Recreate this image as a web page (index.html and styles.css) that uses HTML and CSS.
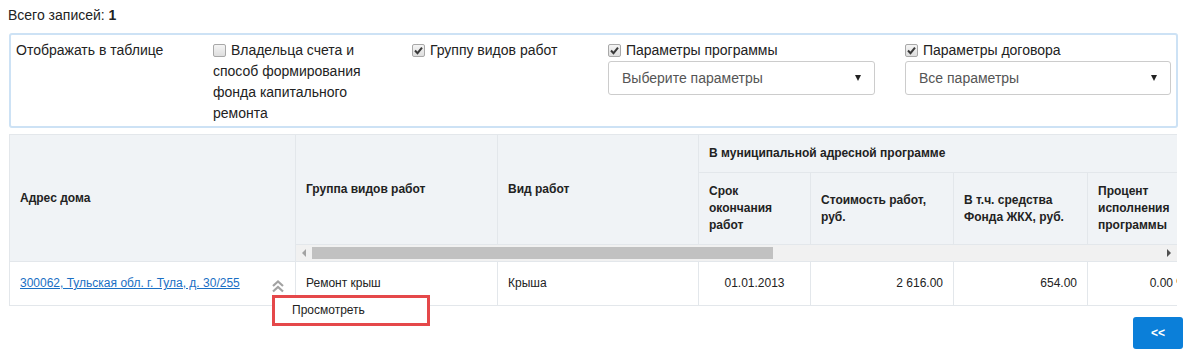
FILE: index.html
```html
<!DOCTYPE html>
<html lang="ru">
<head>
<meta charset="utf-8">
<title>Записи</title>
<link rel="stylesheet" href="styles.css">
</head>
<body>
<div class="total">Всего записей: <b>1</b></div>

<div class="filter">
  <div class="f-label">Отображать в таблице</div>
  <div class="f-col f-col2">
    <span class="cb"></span> Владельца счета и способ формирования фонда капитального ремонта
  </div>
  <div class="f-col f-col3">
    <span class="cb checked"><svg viewBox="0 0 13 13" width="13" height="13"><path d="M3 6.5 L5.5 9.2 L10 3.6" fill="none" stroke="#3a3a3a" stroke-width="2"/></svg></span> Группу видов работ
  </div>
  <div class="f-col f-col4">
    <div class="f-check"><span class="cb checked"><svg viewBox="0 0 13 13" width="13" height="13"><path d="M3 6.5 L5.5 9.2 L10 3.6" fill="none" stroke="#3a3a3a" stroke-width="2"/></svg></span> Параметры программы</div>
    <div class="select"><span>Выберите параметры</span><span class="caret"></span></div>
  </div>
  <div class="f-col f-col5">
    <div class="f-check"><span class="cb checked"><svg viewBox="0 0 13 13" width="13" height="13"><path d="M3 6.5 L5.5 9.2 L10 3.6" fill="none" stroke="#3a3a3a" stroke-width="2"/></svg></span> Параметры договора</div>
    <div class="select"><span>Все параметры</span><span class="caret"></span></div>
  </div>
</div>

<div class="table-area">
  <div class="fixed-col">
    <div class="fixed-head">Адрес дома</div>
    <div class="fixed-body">
      <a class="addr" href="#">300062, Тульская обл. г. Тула, д. 30/255</a>
      <svg class="chev" viewBox="0 0 14 14" width="14" height="14"><path d="M2 7 L7 2.5 L12 7 M2 12.5 L7 8 L12 12.5" fill="none" stroke="#a3a3a3" stroke-width="2.2"/></svg>
    </div>
  </div>
  <div class="scroll-col">
    <div class="head-grid">
      <div class="hc h-group">Группа видов работ</div>
      <div class="hc h-vid">Вид работ</div>
      <div class="hc h-muni">В муниципальной адресной программе</div>
      <div class="hc">Срок окончания работ</div>
      <div class="hc">Стоимость работ, руб.</div>
      <div class="hc">В т.ч. средства Фонда ЖКХ, руб.</div>
      <div class="hc">Процент исполнения программы</div>
    </div>
    <div class="scrollbar">
      <span class="sb-btn"><span class="tri-left"></span></span>
      <span class="sb-thumb"></span>
      <span class="sb-space"></span>
      <span class="sb-btn"><span class="tri-right"></span></span>
    </div>
    <div class="body-grid">
      <div class="bc">Ремонт крыш</div>
      <div class="bc">Крыша</div>
      <div class="bc center">01.01.2013</div>
      <div class="bc right">2 616.00</div>
      <div class="bc right">654.00</div>
      <div class="bc right">0.00 %</div>
    </div>
  </div>
  <div class="menu">Просмотреть</div>
</div>

<div class="pager">
  <button class="btn" type="button">&lt;&lt;</button>
</div>
</body>
</html>
```

FILE: styles.css
```css
* { box-sizing: border-box; }

body {
  margin: 0;
  font-family: "Liberation Sans", Arial, sans-serif;
  color: #222;
  background: #fff;
}

.total {
  padding: 5px 8px 0;
  font-size: 14px;
  line-height: 20px;
  height: 25px;
}

.filter {
  margin: 8px 12px 0 9px;
  border: 2px solid #cde2f5;
  border-radius: 3px;
  padding: 5px 5px 2px 5px;
  display: grid;
  grid-template-columns: 197px 199px 196px 297px 1fr;
  font-size: 14px;
  line-height: 21px;
}

.f-col2 { padding-right: 18px; }
.f-col4 { padding-right: 30px; }

.cb {
  display: inline-block;
  width: 13px;
  height: 13px;
  border: 1px solid #a8a8a8;
  border-radius: 2px;
  background: linear-gradient(#f4f4f4, #dedede);
  vertical-align: -2px;
  margin-right: 1px;
  position: relative;
}
.cb svg {
  position: absolute;
  left: -1px;
  top: -1px;
}

.select {
  height: 34px;
  border: 1px solid #ccc;
  border-radius: 3px;
  display: flex;
  align-items: center;
  justify-content: space-between;
  padding: 0 13px 0 13px;
  color: #555;
  font-size: 14px;
}
.caret {
  width: 0;
  height: 0;
  border-left: 3.5px solid transparent;
  border-right: 3.5px solid transparent;
  border-top: 6px solid #222;
}

.table-area {
  position: relative;
  margin: 6px 13px 0 9px;
  display: flex;
  border-top: 1px solid #e3e7eb;
  font-size: 12px;
  line-height: 17px;
}

.fixed-col {
  width: 287px;
  flex: none;
  border-left: 1px solid #e3e7eb;
  border-right: 1px solid #e3e7eb;
}
.fixed-head {
  height: 127px;
  background: #f0f3f6;
  border-bottom: 1px solid #e3e7eb;
  display: flex;
  align-items: center;
  padding-left: 10px;
  font-weight: bold;
}
.fixed-body {
  height: 44px;
  border-bottom: 1px solid #e3e7eb;
  display: flex;
  align-items: center;
  justify-content: space-between;
  padding: 0 10px 0 10px;
}
.addr {
  color: #1a6fc4;
  text-decoration: underline;
}
.chev { margin-top: 5px; }

.scroll-col {
  flex: 1;
  overflow: hidden;
  min-width: 0;
}

.head-grid, .body-grid {
  display: grid;
  grid-template-columns: 202px 201px 112px 143px 134px 110px;
  width: 902px;
}
.head-grid {
  grid-template-rows: 38px 72px;
  background: #f0f3f6;
}
.hc {
  border-right: 1px solid #e3e7eb;
  border-bottom: 1px solid #e3e7eb;
  display: flex;
  align-items: center;
  padding: 0 10px;
  font-weight: bold;
}
.h-group { grid-row: 1 / 3; grid-column: 1; }
.h-vid { grid-row: 1 / 3; grid-column: 2; }
.h-muni { grid-column: 3 / 7; }

.scrollbar {
  height: 17px;
  background: #f1f1f1;
  border-bottom: 1px solid #e3e7eb;
  display: flex;
  align-items: center;
}
.sb-btn {
  width: 16px;
  height: 16px;
  flex: none;
  display: flex;
  align-items: center;
  justify-content: center;
}
.tri-left {
  border-top: 4px solid transparent;
  border-bottom: 4px solid transparent;
  border-right: 4px solid #a3a3a3;
}
.tri-right {
  border-top: 4px solid transparent;
  border-bottom: 4px solid transparent;
  border-left: 4px solid #505050;
}
.sb-thumb {
  width: 461px;
  height: 12px;
  background: #c1c1c1;
  flex: none;
}
.sb-space { flex: 1; }

.body-grid {
  height: 44px;
}
.bc {
  border-right: 1px solid #e3e7eb;
  border-bottom: 1px solid #e3e7eb;
  display: flex;
  align-items: center;
  padding: 0 10px;
}
.center { justify-content: center; }
.right { justify-content: flex-end; }

.menu {
  position: absolute;
  left: 263px;
  top: 160px;
  width: 158px;
  height: 31px;
  border: 3px solid #e5484a;
  background: #fff;
  padding-left: 17px;
  line-height: 25px;
  font-size: 12px;
}

.pager {
  display: flex;
  justify-content: flex-end;
  margin-top: 11px;
  padding-right: 7px;
}
.btn {
  width: 50px;
  height: 32px;
  border: none;
  border-radius: 3px;
  background: #0b7fd9;
  color: #fff;
  font-family: "Liberation Sans", Arial, sans-serif;
  font-weight: bold;
  font-size: 12px;
}
```
